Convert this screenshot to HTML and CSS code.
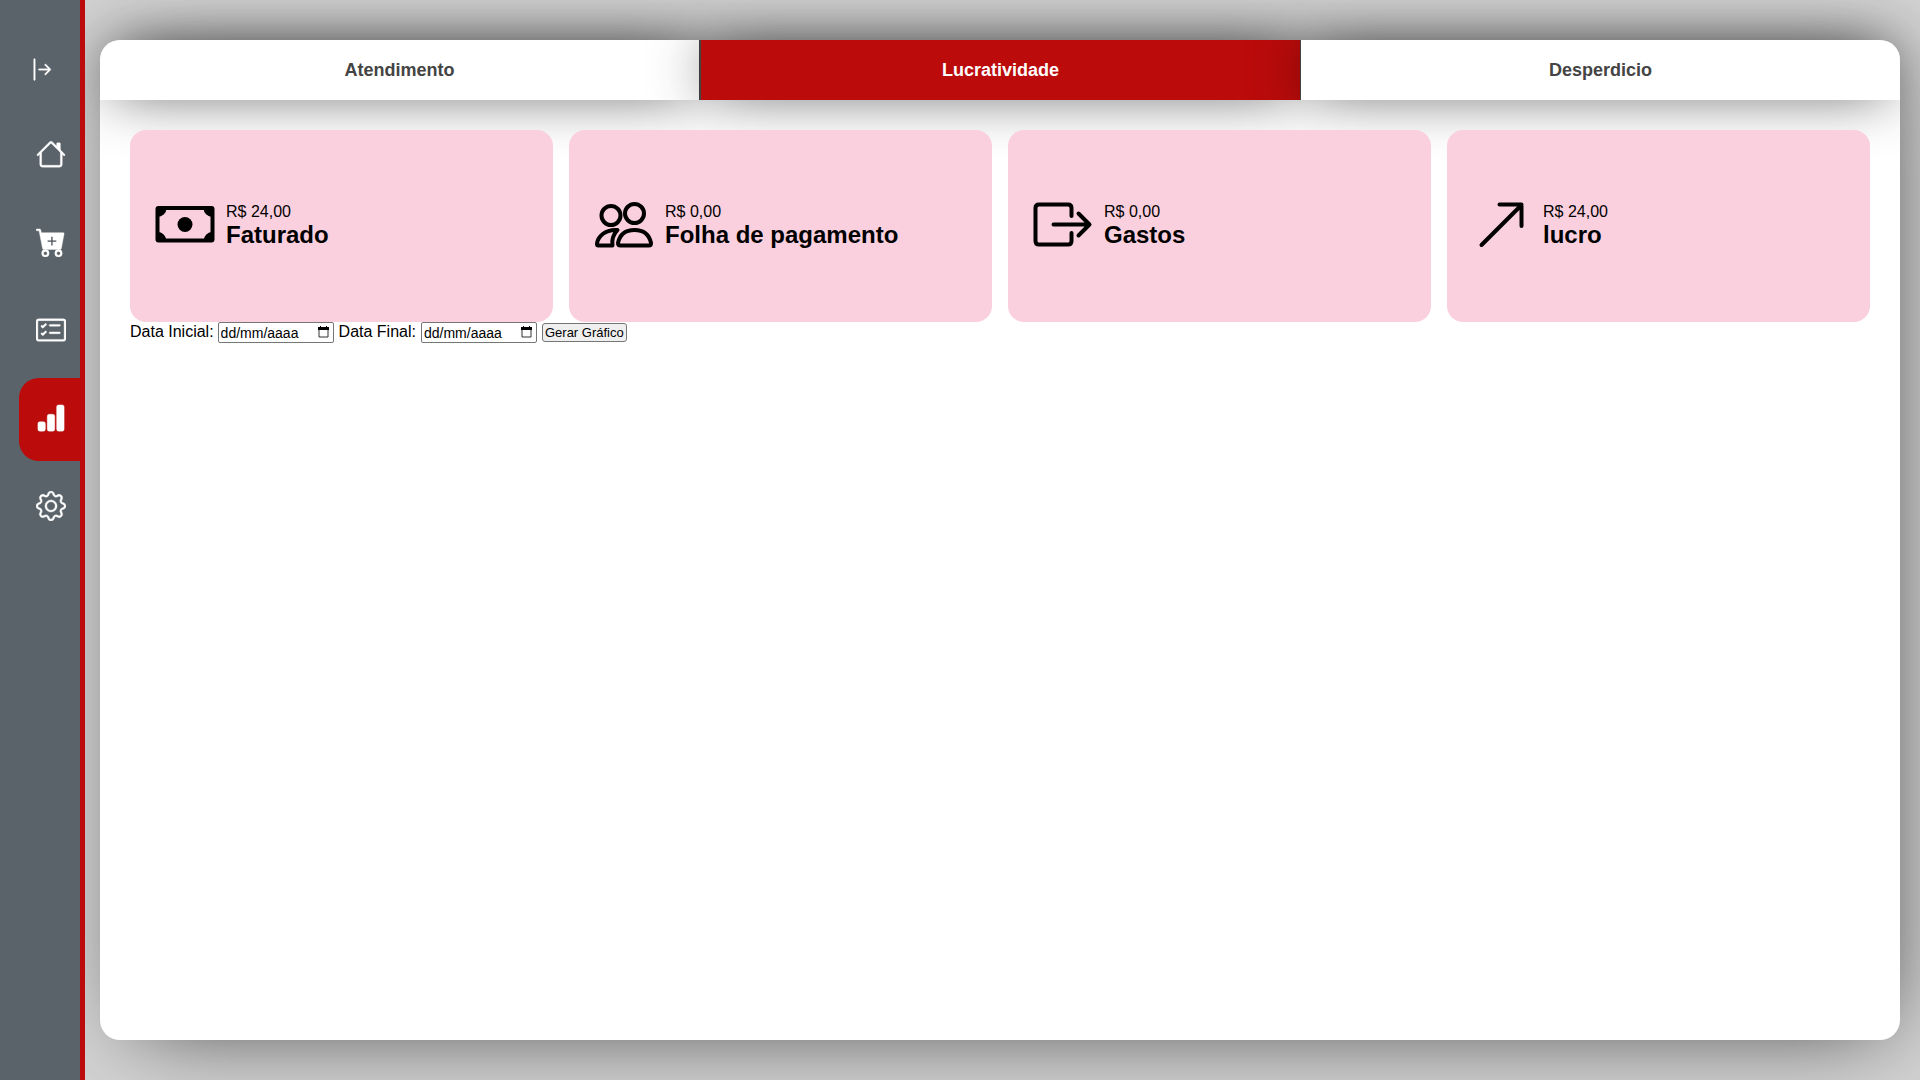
FILE: index.html
```html
<!DOCTYPE html>
<html lang="pt-BR">
<head>
<meta charset="utf-8">
<meta name="viewport" content="width=device-width, initial-scale=1">
<title>Lucratividade</title>
<link rel="stylesheet" href="styles.css">
</head>
<body>
<nav class="sidebar" aria-label="Menu">
  <button class="toggle" type="button" aria-label="Expandir menu">
    <svg viewBox="0 0 16 16"><path d="M6 8a.5.5 0 0 0 .5.5h5.793l-2.147 2.146a.5.5 0 0 0 .708.708l3-3a.5.5 0 0 0 0-.708l-3-3a.5.5 0 0 0-.708.708L12.293 7.5H6.5A.5.5 0 0 0 6 8zm-2.5 7a.5.5 0 0 1-.5-.5v-13a.5.5 0 0 1 1 0v13a.5.5 0 0 1-.5.5z"/></svg>
  </button>
  <a class="item" href="#" aria-label="Início">
    <svg viewBox="0 0 16 16"><path fill-rule="evenodd" d="M2 13.5V7h1v6.5a.5.5 0 0 0 .5.5h9a.5.5 0 0 0 .5-.5V7h1v6.5a1.5 1.5 0 0 1-1.5 1.5h-9A1.5 1.5 0 0 1 2 13.5zm11-11V6l-2-2V2.5a.5.5 0 0 1 .5-.5h1a.5.5 0 0 1 .5.5z"/><path fill-rule="evenodd" d="M7.293 1.5a1 1 0 0 1 1.414 0l6.647 6.646a.5.5 0 0 1-.708.708L8 2.207 1.354 8.854a.5.5 0 1 1-.708-.708L7.293 1.5z"/></svg>
  </a>
  <a class="item" href="#" aria-label="Pedidos">
    <svg viewBox="0 0 16 16"><path d="M.5 1a.5.5 0 0 0 0 1h1.12l1.89 9.59A.5.5 0 0 0 4 12h9a.5.5 0 0 0 .49-.41l1.5-8A.5.5 0 0 0 14.5 3H2.89l-.405-1.62A.5.5 0 0 0 2 1H.5zM8 5.5a.5.5 0 0 1 1 0V7h1.5a.5.5 0 0 1 0 1H9v1.5a.5.5 0 0 1-1 0V8H6.5a.5.5 0 0 1 0-1H8V5.5z"/><path d="M5 12a2 2 0 1 0 0 4 2 2 0 0 0 0-4zm7 0a2 2 0 1 0 0 4 2 2 0 0 0 0-4zm-7 1a1 1 0 1 1 0 2 1 1 0 0 1 0-2zm7 0a1 1 0 1 1 0 2 1 1 0 0 1 0-2z" fill-rule="evenodd"/></svg>
  </a>
  <a class="item" href="#" aria-label="Cardápio">
    <svg viewBox="0 0 16 16"><path d="M14.5 3a.5.5 0 0 1 .5.5v9a.5.5 0 0 1-.5.5h-13a.5.5 0 0 1-.5-.5v-9a.5.5 0 0 1 .5-.5h13zm-13-1A1.5 1.5 0 0 0 0 3.5v9A1.5 1.5 0 0 0 1.5 14h13a1.5 1.5 0 0 0 1.5-1.5v-9A1.5 1.5 0 0 0 14.5 2h-13z"/><path d="M7 5.5a.5.5 0 0 1 .5-.5h5a.5.5 0 0 1 0 1h-5a.5.5 0 0 1-.5-.5zm-1.496-.854a.5.5 0 0 1 0 .708l-1.5 1.5a.5.5 0 0 1-.708 0l-.5-.5a.5.5 0 1 1 .708-.708l.146.147 1.146-1.147a.5.5 0 0 1 .708 0zM7 9.5a.5.5 0 0 1 .5-.5h5a.5.5 0 0 1 0 1h-5a.5.5 0 0 1-.5-.5zm-1.496-.854a.5.5 0 0 1 0 .708l-1.5 1.5a.5.5 0 0 1-.708 0l-.5-.5a.5.5 0 0 1 .708-.708l.146.147 1.146-1.147a.5.5 0 0 1 .708 0z"/></svg>
  </a>
  <a class="item active" href="#" aria-label="Relatórios" aria-current="page">
    <svg viewBox="0 0 16 16"><path d="M1 11a1 1 0 0 1 1-1h2a1 1 0 0 1 1 1v3a1 1 0 0 1-1 1H2a1 1 0 0 1-1-1v-3zm5-4a1 1 0 0 1 1-1h2a1 1 0 0 1 1 1v7a1 1 0 0 1-1 1H7a1 1 0 0 1-1-1V7zm5-5a1 1 0 0 1 1-1h2a1 1 0 0 1 1 1v12a1 1 0 0 1-1 1h-2a1 1 0 0 1-1-1V2z"/></svg>
  </a>
  <a class="item" href="#" aria-label="Configurações">
    <svg viewBox="0 0 16 16"><path d="M8 4.754a3.246 3.246 0 1 0 0 6.492 3.246 3.246 0 0 0 0-6.492zM5.754 8a2.246 2.246 0 1 1 4.492 0 2.246 2.246 0 0 1-4.492 0z"/><path d="M9.796 1.343c-.527-1.79-3.065-1.79-3.592 0l-.094.319a.873.873 0 0 1-1.255.52l-.292-.16c-1.64-.892-3.433.902-2.54 2.541l.159.292a.873.873 0 0 1-.52 1.255l-.319.094c-1.79.527-1.79 3.065 0 3.592l.319.094a.873.873 0 0 1 .52 1.255l-.16.292c-.892 1.64.901 3.434 2.541 2.54l.292-.159a.873.873 0 0 1 1.255.52l.094.319c.527 1.79 3.065 1.79 3.592 0l.094-.319a.873.873 0 0 1 1.255-.52l.292.16c1.64.893 3.434-.902 2.54-2.541l-.159-.292a.873.873 0 0 1 .52-1.255l.319-.094c1.79-.527 1.79-3.065 0-3.592l-.319-.094a.873.873 0 0 1-.52-1.255l.16-.292c.893-1.64-.902-3.433-2.541-2.54l-.292.159a.873.873 0 0 1-1.255-.52l-.094-.319zm-2.633.283c.246-.835 1.428-.835 1.674 0l.094.319a1.873 1.873 0 0 0 2.693 1.115l.291-.16c.764-.415 1.6.42 1.184 1.185l-.159.292a1.873 1.873 0 0 0 1.116 2.692l.318.094c.835.246.835 1.428 0 1.674l-.319.094a1.873 1.873 0 0 0-1.115 2.693l.16.291c.415.764-.42 1.6-1.185 1.184l-.291-.159a1.873 1.873 0 0 0-2.693 1.116l-.094.318c-.246.835-1.428.835-1.674 0l-.094-.319a1.873 1.873 0 0 0-2.692-1.115l-.292.16c-.764.415-1.6-.42-1.184-1.185l.159-.291A1.873 1.873 0 0 0 1.945 8.93l-.319-.094c-.835-.246-.835-1.428 0-1.674l.319-.094A1.873 1.873 0 0 0 3.06 4.377l-.16-.292c-.415-.764.42-1.6 1.185-1.184l.292.159a1.873 1.873 0 0 0 2.692-1.115l.094-.319z"/></svg>
  </a>
</nav>
<main class="panel">
  <div class="tabs">
    <button class="tab" type="button">Atendimento</button>
    <button class="tab selected" type="button">Lucratividade</button>
    <button class="tab" type="button">Desperdicio</button>
  </div>
  <div class="content">
    <section class="cards">
      <article class="card">
        <svg class="icon" viewBox="0 0 60 60"><rect x="2.500" y="13" width="55" height="32.500" rx="1" fill="none" stroke="#000" stroke-width="4"/><path d="M2 13h9.500A9 9 0 0 1 2 22zM58 13h-9.500A9 9 0 0 0 58 22zM2 46h9.500A9 9 0 0 0 2 37zM58 46h-9.500A9 9 0 0 1 58 37z"/><circle cx="30" cy="29.500" r="7.500"/></svg>
        <div><p>R$ 24,00</p><h2>Faturado</h2></div>
      </article>
      <article class="card">
        <svg class="icon line" viewBox="0 0 60 60"><circle cx="17" cy="20.500" r="9.500"/><circle cx="40.500" cy="18.500" r="9.500"/><path d="M23.500 35C11 34 3.500 42 3 49q0 1.500 1.500 1.500h14Q17 42 23.500 35zM24 48C26 38.500 32 35 40.500 35S55 38.500 57 48q0 2.500-2 2.500H26.500Q24 50.500 24 48z"/></svg>
        <div><p>R$ 0,00</p><h2>Folha de pagamento</h2></div>
      </article>
      <article class="card">
        <svg class="icon line" viewBox="0 0 60 60"><path d="M38.500 21V13q0-3.500-3.500-3.500H6Q2.500 9.500 2.500 13v33q0 3.500 3.500 3.500h29q3.500 0 3.500-3.500v-8M20.500 29.500h36M45.500 18.500l11 11-11 11"/></svg>
        <div><p>R$ 0,00</p><h2>Gastos</h2></div>
      </article>
      <article class="card">
        <svg class="icon line" viewBox="0 0 60 60"><path d="M9.500 50L49.500 10M27.500 9.500h22V31"/></svg>
        <div><p>R$ 24,00</p><h2>lucro</h2></div>
      </article>
    </section>
    <form class="filters">
      <label for="inicio">Data Inicial:</label>
      <span class="field">
        <input id="inicio" class="date" type="text" placeholder="dd/mm/aaaa">
        <svg class="calendar" viewBox="0 0 11 12"><path d="M1 2h9v9H1z" fill="none" stroke="#333" stroke-width="1"/><path d="M0 1h11v3H0zM2 0h1v2H2zM8 0h1v2H8z"/></svg>
      </span>
      <label for="fim">Data Final:</label>
      <span class="field">
        <input id="fim" class="date" type="text" placeholder="dd/mm/aaaa">
        <svg class="calendar" viewBox="0 0 11 12"><path d="M1 2h9v9H1z" fill="none" stroke="#333" stroke-width="1"/><path d="M0 1h11v3H0zM2 0h1v2H2zM8 0h1v2H8z"/></svg>
      </span>
      <button class="submit" type="button">Gerar Gráfico</button>
    </form>
  </div>
</main>
</body>
</html>
```
FILE: styles.css
```css
* { box-sizing: border-box; margin: 0; padding: 0; }
body {
  display: flex;
  min-height: 100vh;
  background: #d3d3d3;
  font-family: "Liberation Sans", Arial, sans-serif;
  font-size: 16px;
  color: #000;
}
.sidebar {
  position: relative;
  z-index: 1;
  display: flex;
  flex-direction: column;
  flex: 0 0 85px;
  gap: 5px;
  padding-top: 30px;
  background: #5b636a;
  border-right: 5px solid #bb0b0b;
}
.sidebar svg { display: block; fill: #fff; stroke: #fff; stroke-width: .2px; }
.toggle {
  display: flex;
  align-self: flex-start;
  align-items: center;
  height: 79px;
  padding-left: 29px;
  border: 0;
  background: none;
}
.toggle svg { width: 25px; height: 25px; }
.item {
  display: flex;
  align-items: center;
  justify-content: center;
  height: 83px;
  margin-left: 19px;
  padding-left: 3px;
  padding-bottom: 3px;
  border-radius: 20px 0 0 20px;
}
.item svg { width: 30px; height: 30px; }
.active { background: #bb0b0b; }
.panel {
  flex: 1;
  margin: 40px 20px 40px 15px;
  background: #fff;
  border-radius: 20px;
  box-shadow: 10px 10px 86px -26px rgba(0, 0, 0, .75);
}
.tabs { display: grid; grid-template-columns: repeat(3, 1fr); }
.tab {
  height: 60px;
  border: 0;
  background: #fff;
  color: #444;
  font: bold 18px "Liberation Sans", Arial, sans-serif;
  box-shadow: 0 0 60px -12px rgba(0, 0, 0, .85);
}
.tab:first-child { border-top-left-radius: 20px; border-right: 1px solid #444; }
.tab:last-child { border-top-right-radius: 20px; border-left: 1px solid #444; }
.selected { background: #bb0b0b; color: #fff; border-left: 1px solid #444; }
.content { position: relative; padding: 30px; }
.cards { display: grid; grid-template-columns: repeat(4, 1fr); gap: 16px; }
.card {
  display: flex;
  align-items: center;
  gap: 11px;
  height: 192px;
  padding: 0 24px 2px 25px;
  border-radius: 16px;
  background: #fad0de;
}
.icon { width: 60px; height: 60px; }
.line { fill: none; stroke: #000; stroke-width: 4; stroke-linecap: round; stroke-linejoin: round; }
.card p { line-height: 18px; }
.card h2 { font-size: 24px; line-height: 27px; }
.filters { display: flex; gap: 5px; align-items: center; height: 21px; }
.filters label { line-height: 18px; padding-bottom: 2px; }
.filters label:first-child { margin-right: -1px; }
.field { position: relative; display: flex; }
.date {
  width: 116px;
  height: 21px;
  padding: 0 2px;
  border: 1px solid #767676;
  border-radius: 2px;
  font: 14px "Liberation Sans", Arial, sans-serif;
}
.date::placeholder { color: #000; }
.calendar { position: absolute; top: 4px; right: 5px; width: 11px; height: 12px; }
.submit {
  height: 19px;
  padding: 0 2px;
  border: 1px solid #767676;
  border-radius: 3px;
  background: #efefef;
  font: 13px "Liberation Sans", Arial, sans-serif;
}
```
